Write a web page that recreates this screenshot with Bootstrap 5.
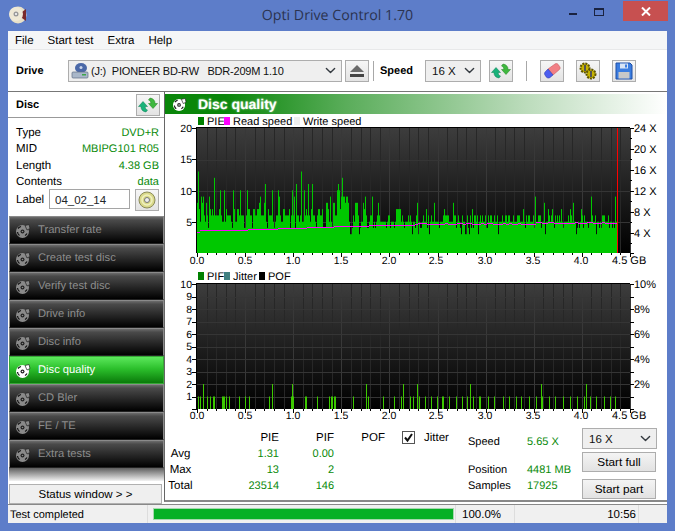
<!DOCTYPE html>
<html lang="en">
<head>
<meta charset="utf-8">
<title>Opti Drive Control 1.70</title>
<link rel="stylesheet" href="https://cdn.jsdelivr.net/npm/bootstrap@5.3.0/dist/css/bootstrap.min.css">
<style>
html,body{margin:0;height:100%;overflow:hidden}
body{background:#5d7dc9;font:11px/1.2 "Liberation Sans",Arial,sans-serif;color:#000;text-rendering:geometricPrecision}
.win{width:675px;height:531px}
.titlebar{height:31px;position:relative}
.app-icon{margin:5px 0 0 9px}
.title{position:absolute;left:0;right:0;top:6px;text-align:center;font:14.2px/20px "Open Sans",sans-serif;color:#2b3350}
.ctrl{width:26px;height:21px}
.ctrl-close{width:45px;height:20px;background:#c75050;margin:1px 7px 0 9px}
.client{margin:0 8px;width:659px;height:492px;background:#fff}
.menubar{height:19px;background:#f5f6f7;border-bottom:1px solid #e8e9ea;padding:4px 0 0 7px}
.menubar span{padding:0 8px 0 0;margin-right:6px;font-size:11.5px}
.toolbar{height:42px;padding-left:8px;background:#fff;border-bottom:1px solid #777}
.bold{font-weight:700}
.tb-label{width:52px;margin-top:3px}
.tb-sel.form-select{height:22px;border:1px solid #adadad;border-radius:0;font-size:11.5px;padding:2px 20px 0 6px;background-color:#efefef;background-position:right 5px center;background-size:11px 11px;color:#111;box-shadow:none}
.sel-drive{position:relative;width:274px}
.sel-drive .form-select{width:100%;padding-left:22px;font-size:11px;letter-spacing:-.2px}
.drive-ico{position:absolute;left:3px;top:2px}
.sel-speed.form-select{width:56px}
.tb-btn.btn{width:24px;height:22px;padding:0;border:1px solid #adadad;border-radius:0;background:linear-gradient(#f6f6f6,#e3e3e3);display:flex;align-items:center;justify-content:center;flex:none}
.sep{width:1px;height:20px;background:#a8a8a8}
.ml-3px{margin-left:3px}.ml-4px{margin-left:4px}.ml-6px{margin-left:6px}.ml-8px{margin-left:8px}.ml-12px{margin-left:12px}.ml-13px{margin-left:13px}
.speed-label{width:45px;margin-top:3px}
.main{height:412px}
.side{width:156px;background:#fff}
.side>*{flex:none}
.disc-head{height:26px;padding:0 4px 0 8px;border-bottom:1px solid #999}
.disc-head span{margin-top:2px}
.info{padding:5px 5px 0 8px}
.info-row{height:16.5px;line-height:16px;font-size:11.5px;padding-top:1.5px}
.val{color:#0a8a0a}
.info-row .val,.tbl .val,.spd .val{font-size:11px}
.label-row{height:24px;padding-right:0;font-size:11.5px}
.disc-label{width:33px;line-height:22px}
.label-input.form-control{width:81px;height:20px;border:1px solid #a5a5a5;border-radius:0;padding:2px 5px 0;font:11.5px "Liberation Sans",sans-serif;margin-right:5px;box-shadow:none}
.nav-stack{margin:3px 0 0 1px;width:155px}
.nav-btn{height:27.5px;margin-bottom:.5px;padding:2px 0 0 5px;background:linear-gradient(#6c6c6c,#4a4a4a 12%,#2a2a2a 50%,#000);border:1px solid #8a8a8a;border-bottom-color:#222;color:#8c8c8c;font-size:11.2px;gap:7px}
.nav-btn svg{color:#8a8a8a}
.nav-btn.active{background:linear-gradient(#5ce85c,#2cc02c 45%,#0a7a0a);color:#fff;border-color:#36a836}
.nav-btn.active svg{color:#fff}
.strip{height:13px;margin-left:1px;width:155px;background:linear-gradient(#5e5e5e,#f2f2f2)}
.status-btn.btn{display:block;width:153px;height:20px;margin:3px 0 0 1px;padding:0;border:1px solid #b0b0b0;border-radius:0;background:#efefef;font-size:11.5px;line-height:18px;color:#000}
.panel{width:503px;margin-left:0;border-left:1px solid #666;height:410px;border-bottom:2px solid #888;background:#fff;padding-top:2px}
.panel-head{height:20px;padding-left:7px;gap:11px;background:linear-gradient(90deg,#0a860a 0,#0a860a 12%,#5aad5a 36%,#bcdcbc 72%,#fff 100%);color:#fff;font-size:14px;font-weight:700;text-shadow:0 0 2px #b6e6b6}
.chart{display:block}
.chart text{font:11px "Liberation Sans",sans-serif;fill:#000}
.chart .ax text{font-size:10.5px}
.stats{height:76px;width:100%}
.tbl{display:grid;grid-template-columns:33px 78px 55px 51px auto;grid-auto-rows:16px;margin:6px 0 0 3px;width:300px;height:64px;line-height:16px;font-size:11.5px}
.tbl .r{text-align:right}
.tbl .c{text-align:center;padding-right:8px}
.chk{display:flex;align-items:center;margin:-1px 0 0 17px;gap:9px}
.chk .form-check-input{width:13px;height:13px;margin:0;border:1px solid #555;border-radius:0;background-color:#fff;background-image:none;position:relative;flex:none}
.chk svg{display:block}
.spd{display:grid;grid-template-columns:59px auto;grid-template-rows:16px 12px 16px 16px;margin:10px 0 0 0;width:114px;line-height:16px;height:64px}
.act{width:75px;margin-top:4px}
.act .form-select{width:75px;height:21px}
.act .btn{display:block;height:20px;padding:1px 0 0;border:1px solid #adadad;border-radius:0;background:linear-gradient(#f4f4f4,#e2e2e2);font-size:11.8px;line-height:17px;color:#000;width:74px}
.act .b1{margin-top:3px}.act .b2{margin-top:7px}
.statusbar{height:19px;background:#f0f0f0;border-top:1px solid #888;padding:0 0 0 2px;font-size:11px}
.cell-a{width:138px;border-right:1px solid #ddd;height:100%;display:flex;align-items:center;padding-top:3px}
.bar{width:301px;height:12px;margin-left:5px;background:#06b025;border:1px solid #a6d8ae}
.cell-b{width:60px;height:100%;padding:3px 0 0 6px;margin-left:1px;border-left:1px solid #ddd;border-right:1px solid #ddd;display:flex;align-items:center;font-size:11.5px}
.cell-c{width:124px;height:100%;border-right:1px solid #ddd;display:flex;align-items:center;justify-content:flex-end;padding:3px 2px 0 0;font-size:11.5px}
</style>
</head>
<body>
<svg width="0" height="0" class="d-block position-fixed">
 <defs>
  <symbol id="arrows" viewBox="0 0 20 18">
   <path d="M.5 10.500 5 5.500l4.500 5H7.200c0 2 .8 3 2.300 3.500l-1.500 2C5 15.500 3 14 2.900 10.500z" fill="#19b27a" stroke="#0c7f55" stroke-width=".5"/>
   <path d="M19.500 7.500 15 12.500l-4.500-5h2.300c0-2-.8-3-2.300-3.500l1.500-2c3 .5 5 2 5.100 5.500z" fill="#3fb83f" stroke="#1f7f1f" stroke-width=".5"/>
  </symbol>
  <symbol id="disc" viewBox="0 0 16 16">
   <circle cx="7.500" cy="8.500" r="6.500" fill="currentColor"/>
   <path d="M3 5.500a6 6 0 0 1 3-2M2.500 9a5 5 0 0 0 2 3.500M10 12.500a5 5 0 0 0 2-2" stroke="#111" stroke-width="1.200" fill="none"/>
   <circle cx="7.500" cy="8.500" r="2" fill="#222"/>
   <circle cx="7.500" cy="8.500" r=".8" fill="currentColor"/>
   <path d="M10 2.500 14 1.500 15 5.500 12 7z" fill="currentColor" stroke="#222" stroke-width=".7"/>
  </symbol>
  <linearGradient id="plotbg" x1="0" y1="0" x2="0" y2="1"><stop offset="0" stop-color="#3d3d3d"/><stop offset="1" stop-color="#000"/></linearGradient>
 </defs>
</svg>
<div class="win d-flex flex-column">
 <div class="titlebar d-flex justify-content-between align-items-start">
  <svg class="app-icon" width="18" height="20" viewBox="0 0 18 20"><circle cx="9" cy="10" r="8.500" fill="#e8e0c8"/><path d="M9 10 17 4v12z" fill="#7a2a2a"/><circle cx="7" cy="9" r="7" fill="#efe9d6"/><circle cx="7" cy="9" r="2.500" fill="#9a9a9a"/><circle cx="7" cy="9" r="1" fill="#fff"/></svg>
  <div class="title">Opti Drive Control 1.70</div>
  <div class="d-flex align-items-start">
   <svg class="ctrl" viewBox="0 0 26 21"><rect x="7" y="13" width="8" height="2" fill="#1a2340"/></svg>
   <svg class="ctrl" viewBox="0 0 26 21"><rect x="6.500" y="8.500" width="9" height="7" fill="none" stroke="#1a2340"/><rect x="6" y="8" width="10" height="2" fill="#1a2340"/></svg>
   <div class="ctrl-close d-flex align-items-center justify-content-center"><svg width="10" height="9" viewBox="0 0 10 9"><path d="M1 .5 9 8.500M9 .5 1 8.500" stroke="#fff" stroke-width="2"/></svg></div>
  </div>
 </div>
 <div class="client d-flex flex-column">
  <div class="menubar d-flex align-items-center"><span>File</span><span>Start test</span><span>Extra</span><span>Help</span></div>
  <div class="toolbar d-flex align-items-center">
   <div class="tb-label bold">Drive</div>
   <div class="sel-drive">
    <select class="form-select tb-sel" aria-label="Drive"><option>(J:)&nbsp; PIONEER BD-RW &nbsp; BDR-209M 1.10</option></select>
    <svg class="drive-ico" width="18" height="18" viewBox="0 0 18 18"><ellipse cx="10" cy="6" rx="6" ry="5" fill="#4a68a8"/><circle cx="10" cy="5.500" r="1.500" fill="#c8d4ea"/><rect x="1" y="10" width="16" height="6" rx="1" fill="#a9b7c9" stroke="#5f6f85" stroke-width=".7"/><rect x="11" y="12" width="4" height="1.500" fill="#3da54a"/></svg>
   </div>
   <button class="btn tb-btn ml-3px" aria-label="Eject"><svg width="16" height="14" viewBox="0 0 16 14"><path d="M8 1 15 8H1z" fill="#6b6b6b"/><rect x="1" y="10" width="14" height="3" fill="#444"/></svg></button>
   <div class="sep ml-4px"></div>
   <div class="speed-label bold ml-6px">Speed</div>
   <select class="form-select tb-sel sel-speed" aria-label="Speed"><option>16 X</option></select>
   <button class="btn tb-btn ml-8px" aria-label="Refresh"><svg width="20" height="18"><use href="#arrows"/></svg></button>
   <div class="sep ml-13px"></div>
   <button class="btn tb-btn ml-13px" aria-label="Erase"><svg width="20" height="18" viewBox="0 0 20 18"><path d="M6 7 13 2c1-.7 2.500-.5 3.200.5l1.500 2.200c.7 1 .5 2.300-.5 3L11 13z" fill="#f27f85" stroke="#c85a60" stroke-width=".6"/><path d="M6 7 11 13 8 15.500c-1.200.9-3 .6-3.800-.6L3 13c-.8-1.200-.5-2.800.6-3.600z" fill="#4c5ef0" stroke="#2e3cb0" stroke-width=".6"/></svg></button>
   <button class="btn tb-btn ml-12px" aria-label="Settings"><svg width="20" height="18" viewBox="0 0 20 18"><circle cx="7" cy="6" r="4.500" fill="#c8b400" stroke="#5e5500" stroke-width="2" stroke-dasharray="2 1"/><rect x="6" y="3" width="2" height="6" fill="#555"/><circle cx="13" cy="12" r="4.500" fill="#c8b400" stroke="#5e5500" stroke-width="2" stroke-dasharray="2 1"/><rect x="12" y="9" width="2" height="6" fill="#555"/></svg></button>
   <button class="btn tb-btn ml-12px" aria-label="Save"><svg width="18" height="18" viewBox="0 0 18 18"><path d="M1 1h14l2 2v14H1z" fill="#3b7de0" stroke="#1f4fa5"/><rect x="5" y="1.500" width="8" height="5" fill="#d8e4f5"/><rect x="10" y="2.500" width="2" height="3" fill="#3b7de0"/><rect x="3.500" y="10" width="11" height="6.500" fill="#c8c8c8"/></svg></button>
  </div>
  <div class="main d-flex">
   <div class="side d-flex flex-column">
    <div class="disc-head d-flex align-items-center justify-content-between">
     <span class="bold">Disc</span>
     <button class="btn tb-btn" aria-label="Refresh disc"><svg width="20" height="18"><use href="#arrows"/></svg></button>
    </div>
    <div class="info">
     <div class="info-row d-flex justify-content-between"><span>Type</span><span class="val">DVD+R</span></div>
     <div class="info-row d-flex justify-content-between"><span>MID</span><span class="val">MBIPG101 R05</span></div>
     <div class="info-row d-flex justify-content-between"><span>Length</span><span class="val">4.38 GB</span></div>
     <div class="info-row d-flex justify-content-between"><span>Contents</span><span class="val">data</span></div>
     <div class="label-row d-flex align-items-start">
      <span class="disc-label">Label</span>
      <input class="form-control label-input" value="04_02_14" aria-label="Label">
      <button class="btn tb-btn" aria-label="Disc label"><svg width="18" height="18" viewBox="0 0 18 18"><circle cx="9" cy="9" r="8" fill="#d9d98a" stroke="#8a8a5a"/><circle cx="9" cy="9" r="5" fill="none" stroke="#f1f1c0" stroke-width="1.500"/><circle cx="9" cy="9" r="2.500" fill="#eee" stroke="#777"/></svg></button>
     </div>
    </div>
    <div class="nav-stack d-flex flex-column">
     <div class="nav-btn d-flex align-items-center"><svg width="16" height="16"><use href="#disc"/></svg>Transfer rate</div>
     <div class="nav-btn d-flex align-items-center"><svg width="16" height="16"><use href="#disc"/></svg>Create test disc</div>
     <div class="nav-btn d-flex align-items-center"><svg width="16" height="16"><use href="#disc"/></svg>Verify test disc</div>
     <div class="nav-btn d-flex align-items-center"><svg width="16" height="16"><use href="#disc"/></svg>Drive info</div>
     <div class="nav-btn d-flex align-items-center"><svg width="16" height="16"><use href="#disc"/></svg>Disc info</div>
     <div class="nav-btn active d-flex align-items-center"><svg width="16" height="16"><use href="#disc"/></svg>Disc quality</div>
     <div class="nav-btn d-flex align-items-center"><svg width="16" height="16"><use href="#disc"/></svg>CD Bler</div>
     <div class="nav-btn d-flex align-items-center"><svg width="16" height="16"><use href="#disc"/></svg>FE / TE</div>
     <div class="nav-btn d-flex align-items-center"><svg width="16" height="16"><use href="#disc"/></svg>Extra tests</div>
    </div>
    <div class="strip"></div>
    <button class="btn status-btn">Status window &gt; &gt;</button>
   </div>
   <div class="panel d-flex flex-column">
    <div class="panel-head d-flex align-items-center"><svg class="text-white" width="15" height="15" viewBox="0 0 16 16"><use href="#disc"/></svg><span>Disc quality</span></div>
    <svg class="chart" id="c1" width="502" height="154" viewBox="165 114 502 154">
     <rect x="198" y="117" width="6" height="8" fill="#008000"/><text x="207" y="125">PIE</text>
     <rect x="224" y="117" width="6" height="8" fill="#ff00ff"/><text x="233" y="125">Read speed</text>
     <rect x="294" y="117" width="6" height="8" fill="#eee"/><text x="303" y="125">Write speed</text>
     <rect x="197" y="128" width="433" height="125" fill="url(#plotbg)"/>
     <g id="c1grid"></g><path id="c1bars" stroke="#00c800" fill="none"/>
     <path id="c1dots" stroke="#ff00ff" fill="none"/>
     <path d="M617.500 128V253" stroke="#f00"/>
     <path d="M196 127.500H630M196.500 127V253" stroke="#000"/>
     <g class="ax" text-anchor="end"><text x="192" y="132">20</text><text x="192" y="163">15</text><text x="192" y="195">10</text><text x="192" y="226">5</text></g>
     <g><text x="634" y="132">24 X</text><text x="634" y="153">20 X</text><text x="634" y="174">16 X</text><text x="634" y="195">12 X</text><text x="634" y="216">8 X</text><text x="634" y="237">4 X</text></g>
     <g class="ax" text-anchor="middle"><text x="197" y="264">0.0</text><text x="245" y="264">0.5</text><text x="293" y="264">1.0</text><text x="341" y="264">1.5</text><text x="389" y="264">2.0</text><text x="436" y="264">2.5</text><text x="485" y="264">3.0</text><text x="533" y="264">3.5</text><text x="581" y="264">4.0</text></g>
     <text x="612" y="264">4.5 GB</text>
    </svg>
    <svg class="chart" id="c2" width="502" height="156" viewBox="165 268 502 156">
     <rect x="198" y="272" width="6" height="8" fill="#008000"/><text x="207" y="280">PIF</text>
     <rect x="224" y="272" width="6" height="8" fill="#408080"/><text x="233" y="280">Jitter</text>
     <rect x="259" y="272" width="6" height="8" fill="#000"/><text x="268" y="280">POF</text>
     <rect x="197" y="284" width="433" height="125" fill="url(#plotbg)"/>
     <g id="c2grid"></g><path id="c2bars" stroke="#3cc800" fill="none"/>
     <path d="M196 283.500H630M196.500 283V409" stroke="#000"/>
     <g class="ax" text-anchor="end"><text x="192" y="288">10</text><text x="192" y="300">9</text><text x="192" y="313">8</text><text x="192" y="325">7</text><text x="192" y="338">6</text><text x="192" y="350">5</text><text x="192" y="363">4</text><text x="192" y="375">3</text><text x="192" y="388">2</text><text x="192" y="400">1</text></g>
     <g><text x="634" y="288">10%</text><text x="634" y="313">8%</text><text x="634" y="338">6%</text><text x="634" y="363">4%</text><text x="634" y="388">2%</text></g>
     <g class="ax" text-anchor="middle"><text x="197" y="419">0.0</text><text x="245" y="419">0.5</text><text x="293" y="419">1.0</text><text x="341" y="419">1.5</text><text x="389" y="419">2.0</text><text x="436" y="419">2.5</text><text x="485" y="419">3.0</text><text x="533" y="419">3.5</text><text x="581" y="419">4.0</text></g>
     <text x="612" y="419">4.5 GB</text>
    </svg>
    <div class="stats d-flex">
     <div class="tbl">
      <span></span><span class="r">PIE</span><span class="r">PIF</span><span class="r">POF</span>
      <label class="chk"><span class="form-check-input d-flex align-items-center justify-content-center"><svg width="11" height="11" viewBox="0 0 11 11"><path d="M2 5.500 4.500 8.500 9 2" fill="none" stroke="#111" stroke-width="2"/></svg></span>Jitter</label>
      <span class="c">Avg</span><span class="r val">1.31</span><span class="r val">0.00</span><span></span><span></span>
      <span class="c">Max</span><span class="r val">13</span><span class="r val">2</span><span></span><span></span>
      <span class="c">Total</span><span class="r val">23514</span><span class="r val">146</span><span></span><span></span>
     </div>
     <div class="spd">
      <span>Speed</span><span class="val">5.65 X</span><span></span><span></span>
      <span>Position</span><span class="val">4481 MB</span>
      <span>Samples</span><span class="val">17925</span>
     </div>
     <div class="act">
      <select class="form-select tb-sel" aria-label="Test speed"><option>16 X</option></select>
      <button class="btn b1">Start full</button>
      <button class="btn b2">Start part</button>
     </div>
    </div>
   </div>
  </div>
  <div class="statusbar d-flex align-items-center">
   <div class="cell-a">Test completed</div>
   <div class="bar"></div>
   <div class="cell-b">100.0%</div>
   <div class="cell-c">10:56</div>
  </div>
 </div>
</div>
<script>
(function(){
 var seed=11;function R(){seed=(seed*16807)%2147483647;return seed/2147483647;}
 function grid(id,top,bottom,hs){
  var s='';
  for(var i=1;i<=45;i++){var x=197+i*9.62;s+='<path d="M'+(Math.round(x)+.5)+' '+top+'V'+bottom+'" stroke="'+(i%5==0?'#383838':'#272727')+'"/>';}
  hs.forEach(function(y){s+='<path d="M197 '+(Math.round(y)+.5)+'H630" stroke="#353535"/>';});
  for(var t=0;t<=45;t++){var x2=197+t*9.62;s+='<path d="M'+(Math.round(x2)+.5)+' '+bottom+'v'+(t%5==0?4:2)+'" stroke="#000"/>';}
  document.getElementById(id).innerHTML=s;
 }
 function ticks(top,step,n,major,x1){var d='';for(var i=0;i<=n;i++){var y=Math.round(top+i*step)+.5;d+='M'+x1+' '+y+'h'+(i%major==0?4:2);}return d;}
 grid('c1grid',128,253,[159.5,191,222]);
 var hs=[];for(var k=1;k<10;k++)hs.push(284+k*12.5);
 grid('c2grid',284,409,hs);
 function add(svgId,d){var p=document.createElementNS('http://www.w3.org/2000/svg','path');p.setAttribute('d',d);p.setAttribute('stroke','#000');document.getElementById(svgId).appendChild(p);}
 add('c1',ticks(128,10.45,12,2,630)+'M192 128.500h5M192 159.500h5M192 191.500h5M192 222.500h5');
 var l2='';for(var q=0;q<=10;q++){l2+='M192 '+(Math.round(284+q*12.5)+.5)+'h5';}
 add('c2',ticks(284,12.5,10,1,630)+l2);

 var spikes={198.3:13,201:9,203:9,214:12,220:10,224:10,233:10,240:10,247:10,265:11,272:10,278:10,292:10,296:11,301:13,304:10,308:11,312:11,330:9,338:11,342:12,355:8,365:9,372:9,378:8,
  417:8,426:7,434:8,444:7,453:8,472:7,482:6,494:6,497:6,513:6,523:7,535:9,544:8,548:7,552:7,561:7,570:7,573:8,581:7,591:9,603:6,608:6,615:9};
 var d='',prev=6;
 for(var x=197;x<617;x++){
  var gb=(x-197)/96,b=gb<1.45?6:gb<1.58?8.6:gb<2.3?5.3:5;
  if(gb<.05)b=7;
  var r=R(),v=b;
  if(r<.2)v=b+1; else if(r<.3)v=b+2; else if(r<.34)v=b+3; else if(r<.46)v=b-1; else if(r<.52)v=b-2;
  if(gb>2.3&&r<.34&&r>=.1)v=b+1;
  v=Math.round(v);
  if(gb<2.3&&R()<.3&&r>=.52)v=prev;
  prev=v;
  for(var sx in spikes){if(Math.floor(sx)==x)v=spikes[sx];}
  d+='M'+(x+.5)+' 253V'+(253-v*6.27).toFixed(1);
 }
 document.getElementById('c1bars').setAttribute('d',d);
 var line=[[197,232],[200,230],[245,230],[292,228.5],[345,226.5],[412,225],[500,224.2],[616,223.5]],pd='';
 for(var i=0;i<line.length-1;i++){
  for(var px=line[i][0];px<line[i+1][0];px+=3){
   var t=(px-line[i][0])/(line[i+1][0]-line[i][0]);
   var y=line[i][1]+t*(line[i+1][1]-line[i][1]);
   if(px>415&&R()<.3)y-=1;
   pd+='M'+px+' '+(Math.floor(y)+.5)+'h3';
  }
 }
 document.getElementById('c1dots').setAttribute('d',pd);
 var one=[198,200,207,210,213,214,222,223,224,226,229,239,245,249,269,291,292,293,305,306,317,329,331,332,334,335,353,368,383,394,401,410,413,
  419,425,431,437,442,443,449,456,462,467,473,479,480,488,494,503,509,516,521,529,536,542,549,555,563,570,577,584,590,596,604,610,615];
 var two=[203,272,292,366,403,417,470,541,586];
 var e='';
 one.forEach(function(x){e+='M'+(x+.5)+' 409v-12.500';});
 two.forEach(function(x){e+='M'+(x+.5)+' 409v-25';});
 document.getElementById('c2bars').setAttribute('d',e);
})();
</script>
<script src="https://cdn.jsdelivr.net/npm/bootstrap@5.3.0/dist/js/bootstrap.bundle.min.js"></script>
</body>
</html>
